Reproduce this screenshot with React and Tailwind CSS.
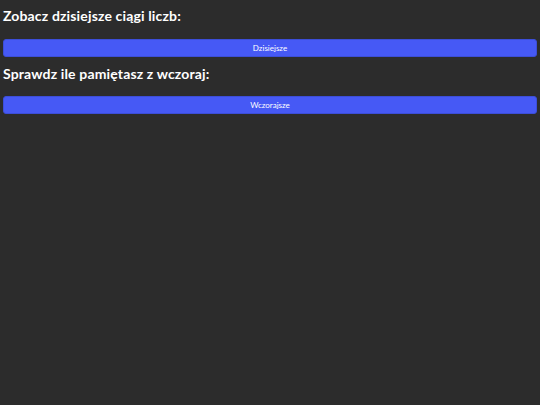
export default function App() {
  return (
    <div
      className="min-h-[405px] w-full bg-[#2c2c2c] px-[3px] pt-[6px] text-white"
      style={{ fontFamily: 'Lato, sans-serif' }}
    >
      <h2 className="text-[14px] font-bold leading-[20px] tracking-[0.15px]">Zobacz dzisiejsze ciągi liczb:</h2>
      <button className="mt-[13px] h-[18px] w-full rounded-[3px] border border-[#3c4ed8] bg-[#4659f5] text-[8px] text-white">
        Dzisiejsze
      </button>
      <h2 className="mt-[7px] text-[14px] font-bold leading-[20px] tracking-[0.15px]">Sprawdz ile pamiętasz z wczoraj:</h2>
      <button className="mt-[12px] h-[18px] w-full rounded-[3px] border border-[#3c4ed8] bg-[#4659f5] text-[8px] text-white">
        Wczorajsze
      </button>
    </div>
  );
}
